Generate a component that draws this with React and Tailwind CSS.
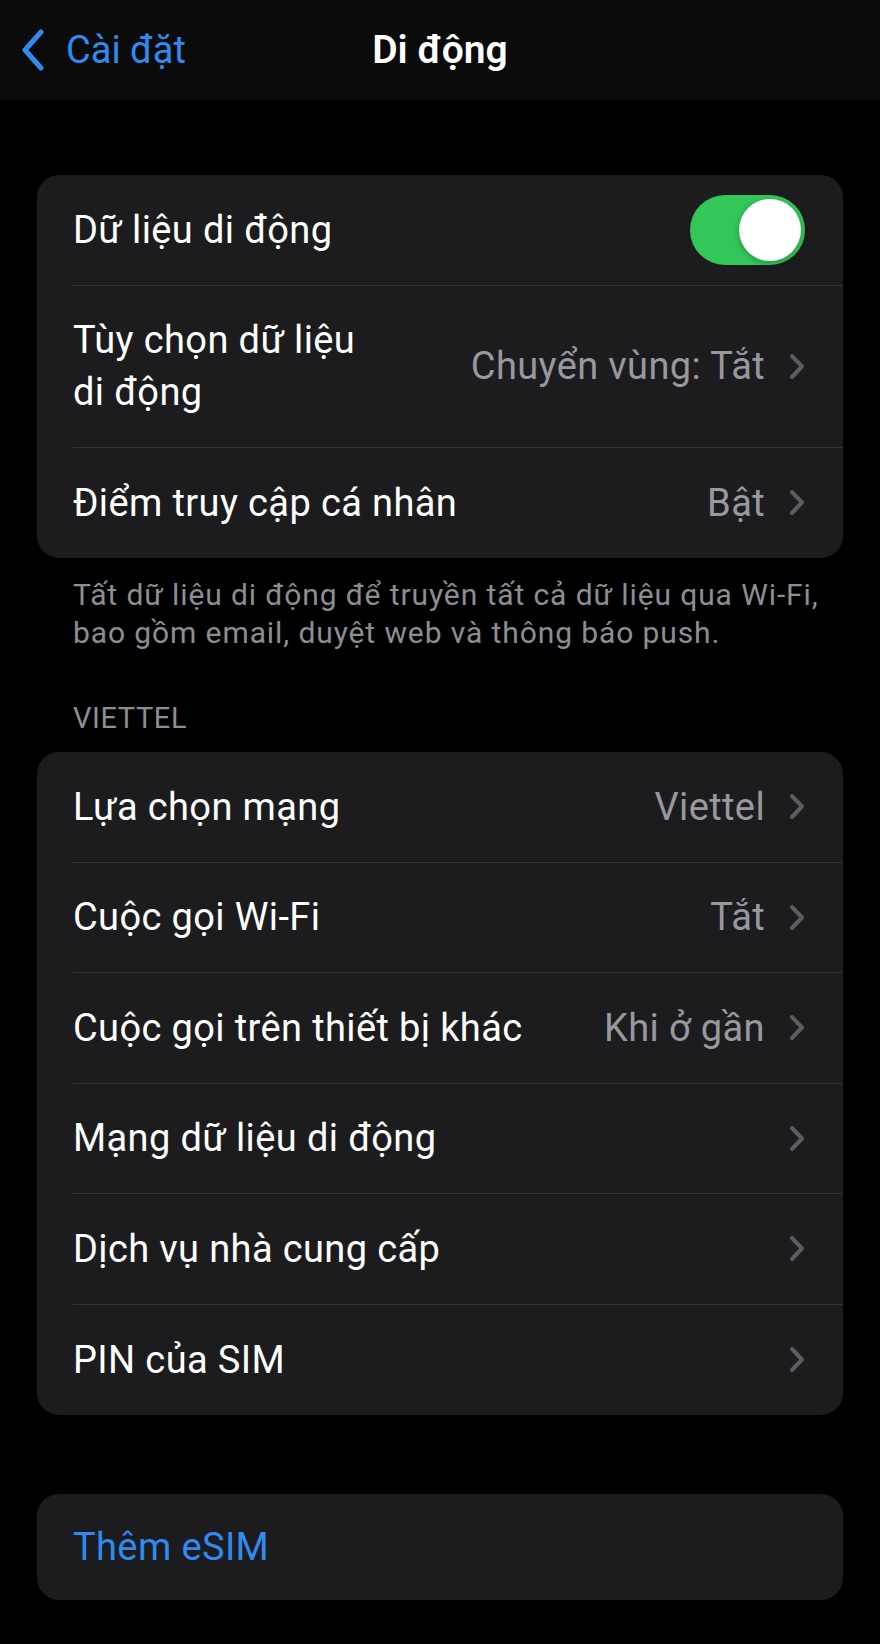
import React from "react";

const font = "font-['Roboto','Noto_Sans','Liberation_Sans',sans-serif]";

function Chevron() {
  return (
    <svg width="16" height="27" viewBox="0 0 16 27" className="shrink-0">
      <polyline
        points="3,3 13,13.5 3,24"
        fill="none"
        stroke="#5c5c61"
        strokeWidth="4"
        strokeLinecap="round"
        strokeLinejoin="round"
      />
    </svg>
  );
}

function Toggle() {
  return (
    <div className="flex h-[70px] w-[115px] items-center justify-end rounded-full bg-[#33c659] p-[4px]">
      <div className="h-[62px] w-[62px] rounded-full bg-white shadow-[0_2px_6px_rgba(0,0,0,0.25)]" />
    </div>
  );
}

function Row({ label, value, chevron = true, toggle = false, last = false, tall = false }) {
  return (
    <div className="pl-[36px]">
      <div
        className={`flex items-center justify-between gap-6 pr-[38px] ${
          tall ? "min-h-[162px]" : "min-h-[110.5px]"
        } ${last ? "" : "border-b-[1.5px] border-[#343437]"}`}
      >
        <div className="text-[38px] leading-[52px] tracking-[0.01em] text-white">{label}</div>
        <div className="flex items-center gap-[24px]">
          {value && (
            <span className="text-[38px] leading-[52px] tracking-[0.01em] text-[#98989e]">{value}</span>
          )}
          {toggle && <Toggle />}
          {chevron && !toggle && <Chevron />}
        </div>
      </div>
    </div>
  );
}

export default function App() {
  return (
    <div className={`min-h-[1644px] w-[880px] bg-black ${font}`}>
      <header className="grid h-[100px] grid-cols-[1fr_auto_1fr] items-center bg-[#0b0b0b]">
        <div className="flex items-center gap-[21px] pl-[21px]">
          <svg width="24" height="42" viewBox="0 0 24 42">
            <polyline
              points="20,3 4,21 20,39"
              fill="none"
              stroke="#2f8bf0"
              strokeWidth="5"
              strokeLinecap="round"
              strokeLinejoin="round"
            />
          </svg>
          <span className="text-[38px] leading-none text-[#2f8bf0]">Cài đặt</span>
        </div>
        <h1 className="text-[39px] font-semibold leading-none text-white">Di động</h1>
        <div />
      </header>

      <main className="px-[37px] pt-[75px]">
        <section className="overflow-hidden rounded-[22px] bg-[#1c1c1e]">
          <Row label="Dữ liệu di động" toggle />
          <Row
            label={
              <>
                Tùy chọn dữ liệu
                <br />
                di động
              </>
            }
            value="Chuyển vùng: Tắt"
            tall
          />
          <Row label="Điểm truy cập cá nhân" value="Bật" last />
        </section>

        <p className="pl-[36px] pr-[24px] pt-[18px] text-[30px] leading-[38px] tracking-[0.03em] text-[#8d8d93]">
          Tất dữ liệu di động để truyền tất cả dữ liệu qua Wi-Fi, bao gồm email, duyệt web và thông báo push.
        </p>

        <h2 className="px-[36px] pt-[47px] pb-[14px] text-[29px] leading-[39px] tracking-[0.02em] text-[#8d8d93]">
          VIETTEL
        </h2>

        <section className="overflow-hidden rounded-[22px] bg-[#1c1c1e]">
          <Row label="Lựa chọn mạng" value="Viettel" />
          <Row label="Cuộc gọi Wi-Fi" value="Tắt" />
          <Row label="Cuộc gọi trên thiết bị khác" value="Khi ở gần" />
          <Row label="Mạng dữ liệu di động" />
          <Row label="Dịch vụ nhà cung cấp" />
          <Row label="PIN của SIM" last />
        </section>

        <section className="mt-[79px] flex h-[106px] items-center rounded-[22px] bg-[#1c1c1e] px-[36px]">
          <span className="text-[38px] leading-[52px] tracking-[0.01em] text-[#2f8bf0]">Thêm eSIM</span>
        </section>
      </main>
    </div>
  );
}
